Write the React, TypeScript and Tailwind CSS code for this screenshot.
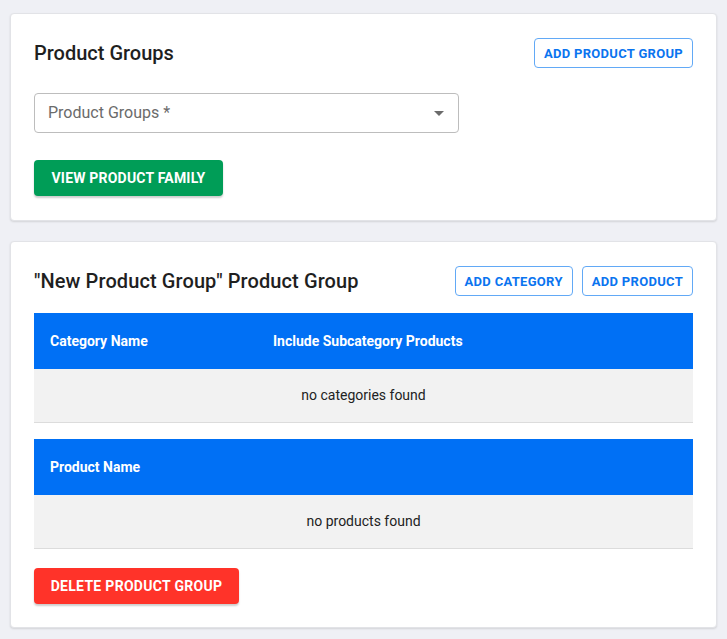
import React from "react";

function OutlineBtn({ children }: { children: React.ReactNode }) {
  return (
    <button className="h-[30px] px-[9px] rounded-[4px] border border-[#62a9f6] text-[#0a74ef] text-[13px] font-bold tracking-[0.3px] leading-none bg-white">
      {children}
    </button>
  );
}

export default function App() {
  return (
    <div
      className="min-h-[639px] bg-[#eff0f5] pt-[13px] px-[10px] pb-[10px] flex flex-col gap-[20px]"
      style={{ fontFamily: "Roboto, 'Liberation Sans', sans-serif" }}
    >
      <div className="bg-white rounded-[4px] border border-[#e2e3e7] shadow-[0_1px_2px_rgba(0,0,0,0.12)] px-[23px] pt-[24px] pb-[24px]">
        <div className="flex items-center justify-between h-[30px]">
          <h2 className="text-[20px] font-medium text-[#1f1f1f]">Product Groups</h2>
          <OutlineBtn>ADD PRODUCT GROUP</OutlineBtn>
        </div>
        <div className="mt-[25px] w-[425px] h-[40px] rounded-[4px] border border-[#bdbdbd] flex items-center justify-between pl-[13px] pr-[14px]">
          <span className="text-[16px] text-[#6b6b6b]">Product Groups *</span>
          <svg width="10" height="5" viewBox="0 0 10 5">
            <path d="M0 0 L10 0 L5 5 Z" fill="#6b6b6b" />
          </svg>
        </div>
        <button className="mt-[27px] h-[36px] w-[189px] rounded-[4px] bg-[#009d57] text-white text-[14px] font-bold tracking-[0.2px] shadow-[0_2px_2px_rgba(0,0,0,0.2)]">
          VIEW PRODUCT FAMILY
        </button>
      </div>

      <div className="bg-white rounded-[4px] border border-[#e2e3e7] shadow-[0_1px_2px_rgba(0,0,0,0.12)] px-[23px] pt-[24px] pb-[23px]">
        <div className="flex items-center justify-between h-[30px]">
          <h2 className="text-[20px] font-medium text-[#1f1f1f] tracking-[0.1px]">"New Product Group" Product Group</h2>
          <div className="flex gap-[9px]">
            <OutlineBtn>ADD CATEGORY</OutlineBtn>
            <OutlineBtn>ADD PRODUCT</OutlineBtn>
          </div>
        </div>
        <div className="mt-[17px]">
          <div className="h-[56px] bg-[#0070f5] flex items-center text-white text-[14px] font-bold">
            <div className="w-[223px] pl-[16px]">Category Name</div>
            <div className="pl-[16px]">Include Subcategory Products</div>
          </div>
          <div className="h-[54px] bg-[#f2f2f2] border-b border-[#dcdcdc] flex items-center justify-center text-[14px] text-[#222]">
            no categories found
          </div>
        </div>
        <div className="mt-[16px]">
          <div className="h-[56px] bg-[#0070f5] flex items-center text-white text-[14px] font-bold">
            <div className="pl-[16px]">Product Name</div>
          </div>
          <div className="h-[54px] bg-[#f2f2f2] border-b border-[#dcdcdc] flex items-center justify-center text-[14px] text-[#222]">
            no products found
          </div>
        </div>
        <button className="mt-[19px] h-[36px] w-[205px] rounded-[4px] bg-[#ff3329] text-white text-[14px] font-bold tracking-[0.3px] shadow-[0_2px_2px_rgba(0,0,0,0.2)]">
          DELETE PRODUCT GROUP
        </button>
      </div>
    </div>
  );
}
